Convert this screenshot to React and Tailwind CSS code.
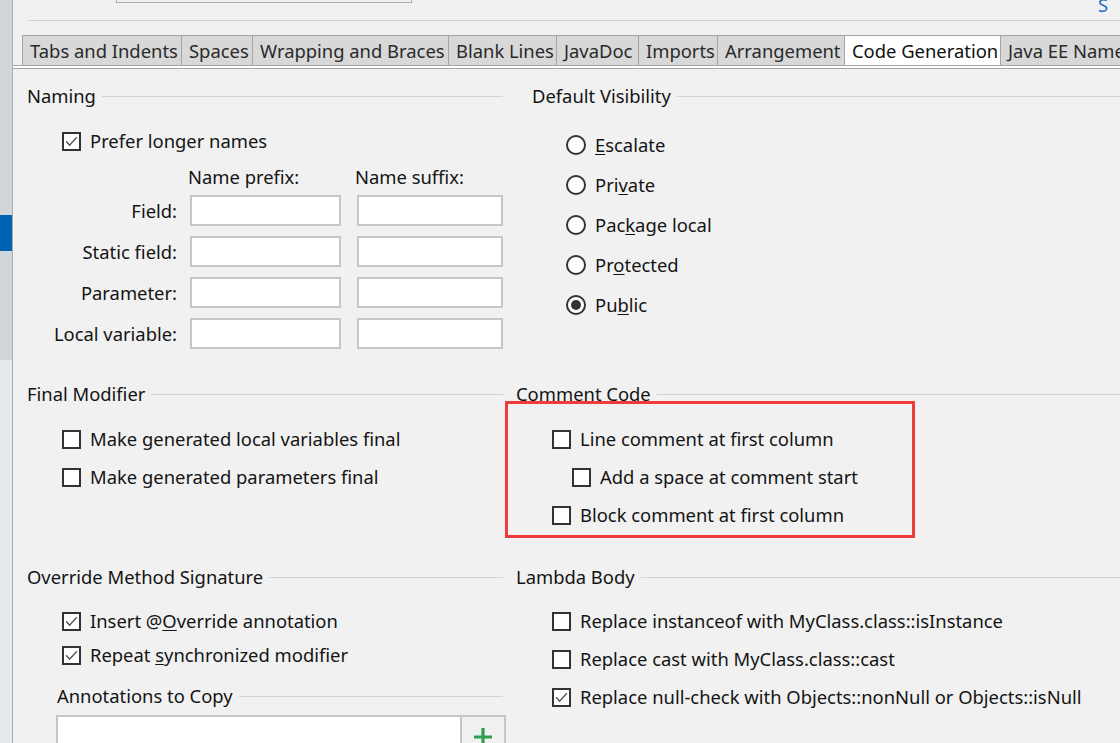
import React from "react";

function Box({ checked }) {
  return (
    <span className="w-[19px] h-[19px] border-2 border-[#333333] bg-white flex items-center justify-center shrink-0">
      {checked && (
        <svg width="13" height="11" viewBox="0 0 13 11">
          <path d="M1.2 5.2 L4.6 9.2 L11.8 1.2" fill="none" stroke="#555555" strokeWidth="1.4" />
        </svg>
      )}
    </span>
  );
}

function Radio({ checked }) {
  return (
    <span className="w-[20px] h-[20px] rounded-full border-2 border-[#333333] bg-white flex items-center justify-center shrink-0">
      {checked && <span className="w-[10px] h-[10px] rounded-full bg-[#333333]" />}
    </span>
  );
}

function Header({ children, className = "" }) {
  return (
    <div className={"flex items-center h-6 shrink-0 " + className}>
      <span className="whitespace-nowrap">{children}</span>
      <div className="flex-1 h-px bg-[#d2d2d2] ml-[6px]" />
    </div>
  );
}

function Check({ checked, children, className = "" }) {
  return (
    <div className={"flex items-center h-6 shrink-0 " + className}>
      <Box checked={checked} />
      <span className="ml-[9px] whitespace-nowrap">{children}</span>
    </div>
  );
}

function RadioRow({ checked, children }) {
  return (
    <div className="flex items-center h-10 shrink-0 pl-[50px]">
      <Radio checked={checked} />
      <span className="ml-[9px] whitespace-nowrap">{children}</span>
    </div>
  );
}

function InputRow({ label, first }) {
  return (
    <div className={"flex items-center shrink-0 " + (first ? "mt-[6px]" : "mt-[10px]")}>
      <span className="w-[150px] shrink-0 text-right whitespace-nowrap">{label}</span>
      <div className="ml-[13px] w-[151px] shrink-0 h-[31px] border-2 border-[#c6c6c6] bg-white" />
      <div className="ml-[16px] w-[146px] shrink-0 h-[31px] border-2 border-[#c6c6c6] bg-white" />
    </div>
  );
}

const tabs = [
  ["Tabs and Indents", "w-[160px]"],
  ["Spaces", "w-[71px]"],
  ["Wrapping and Braces", "w-[196px]"],
  ["Blank Lines", "w-[108px]"],
  ["JavaDoc", "w-[82px]"],
  ["Imports", "w-[79px]"],
  ["Arrangement", "w-[127px]"],
  ["Code Generation", "w-[156px]"],
  ["Java EE Names", "w-[140px]"],
];

export default function App() {
  return (
    <div className="w-[1120px] h-[743px] overflow-hidden flex font-['Noto_Sans',sans-serif] text-[18.4px] text-[#141414] bg-[#f1f1f1]">
      {/* sidebar */}
      <div className="w-[13px] shrink-0 flex flex-col border-r border-[#ababab]">
        <div className="h-[215px] shrink-0 bg-[#d1d6db]" />
        <div className="h-[36px] shrink-0 bg-[#0063b1]" />
        <div className="h-[109px] shrink-0 bg-[#d1d6db]" />
        <div className="flex-1 bg-[#e5eaee]" />
      </div>

      {/* main */}
      <div className="flex-1 min-w-0 overflow-hidden">
        {/* top */}
        <div className="h-[20px] flex items-start relative">
          <div className="ml-[103px] w-[296px] h-[3px] border border-t-0 border-[#adadad]" />
          <span className="absolute left-[1085px] -top-[9px] text-[#1f6fc5]">S</span>
        </div>
        <div className="ml-[15px] h-px bg-[#d4d4d4]" />
        <div className="h-[14px]" />

        {/* tabs */}
        <div className="flex h-[30px] pl-[9px]">
          {tabs.map(([t, w], i) => (
            <div
              key={t}
              className={
                w +
                " shrink-0 h-full flex items-center pl-[7px] whitespace-nowrap overflow-hidden border-t border-r border-[#a5a5a5] " +
                (i === 0 ? "border-l " : "") +
                (t === "Code Generation" ? "bg-white text-[#111111]" : "bg-[#d8d8d8] text-[#2a2a2a]")
              }
            >
              {t}
            </div>
          ))}
        </div>
        <div className="h-[4px] border-t border-b border-[#a5a5a5] bg-white" />

        {/* content */}
        <div className="flex flex-col pl-[14px] pt-[15px]">
          {/* row 1 */}
          <div className="flex h-[298px] shrink-0">
            <div className="w-[476px] shrink-0 flex flex-col">
              <Header>Naming</Header>
              <Check checked className="mt-[21px] pl-[35px]">Prefer longer names</Check>
              <div className="flex items-center h-6 shrink-0 mt-[12px]">
                <span className="ml-[161px] whitespace-nowrap">Name prefix:</span>
                <span className="ml-auto mr-[-2px] w-[150px] whitespace-nowrap">Name suffix:</span>
              </div>
              <InputRow label="Field:" first />
              <InputRow label="Static field:" />
              <InputRow label="Parameter:" />
              <InputRow label="Local variable:" />
            </div>
            <div className="flex-1 ml-[13px] flex flex-col">
              <Header className="pl-[16px]">Default Visibility</Header>
              <div className="mt-[17px] flex flex-col">
                <RadioRow>
                  <span className="underline underline-offset-2">E</span>scalate
                </RadioRow>
                <RadioRow>
                  Pri<span className="underline underline-offset-2">v</span>ate
                </RadioRow>
                <RadioRow>
                  Pac<span className="underline underline-offset-2">k</span>age local
                </RadioRow>
                <RadioRow>
                  Pr<span className="underline underline-offset-2">o</span>tected
                </RadioRow>
                <RadioRow checked>
                  Pu<span className="underline underline-offset-2">b</span>lic
                </RadioRow>
              </div>
            </div>
          </div>

          {/* row 2 */}
          <div className="flex h-[183px] shrink-0">
            <div className="w-[476px] shrink-0 flex flex-col">
              <Header>Final Modifier</Header>
              <Check className="mt-[21px] pl-[35px]">Make generated local variables final</Check>
              <Check className="mt-[14px] pl-[35px]">Make generated parameters final</Check>
            </div>
            <div className="flex-1 ml-[13px] flex flex-col relative">
              <Header>Comment Code</Header>
              <Check className="mt-[21px] pl-[36px]">Line comment at first column</Check>
              <Check className="mt-[14px] pl-[56px]">Add a space at comment start</Check>
              <Check className="mt-[14px] pl-[36px]">Block comment at first column</Check>
              <div className="absolute left-[-11px] top-[19px] w-[410px] h-[137px] border-[3px] border-[#ef3b3b]" />
            </div>
          </div>

          {/* row 3 */}
          <div className="flex shrink-0">
            <div className="w-[476px] shrink-0 flex flex-col">
              <Header>Override Method Signature</Header>
              <Check checked className="mt-[20px] pl-[35px]">
                Insert @<span className="underline underline-offset-2">O</span>verride annotation
              </Check>
              <Check checked className="mt-[10px] pl-[35px]">
                Repeat <span className="underline underline-offset-2">s</span>ynchronized modifier
              </Check>
              <Header className="mt-[17px] pl-[30px]">Annotations to Copy</Header>
              <div className="mt-[7px] ml-[29px] flex h-[40px] shrink-0">
                <div className="w-[406px] shrink-0 h-full border-2 border-[#c6c6c6] bg-white" />
                <div className="w-[44px] shrink-0 h-full border-2 border-l-0 border-[#c6c6c6] bg-[#f1f1f1] flex justify-center pt-[10px]">
                  <svg width="20" height="20" viewBox="0 0 20 20">
                    <path d="M10 1 V19 M1 10 H19" stroke="#2e9e4f" strokeWidth="3.2" />
                  </svg>
                </div>
              </div>
            </div>
            <div className="flex-1 ml-[13px] flex flex-col">
              <Header>Lambda Body</Header>
              <Check className="mt-[20px] pl-[36px]">Replace instanceof with MyClass.class::isInstance</Check>
              <Check className="mt-[14px] pl-[36px]">Replace cast with MyClass.class::cast</Check>
              <Check checked className="mt-[14px] pl-[36px]">Replace null-check with Objects::nonNull or Objects::isNull</Check>
            </div>
          </div>
        </div>
      </div>
    </div>
  );
}
